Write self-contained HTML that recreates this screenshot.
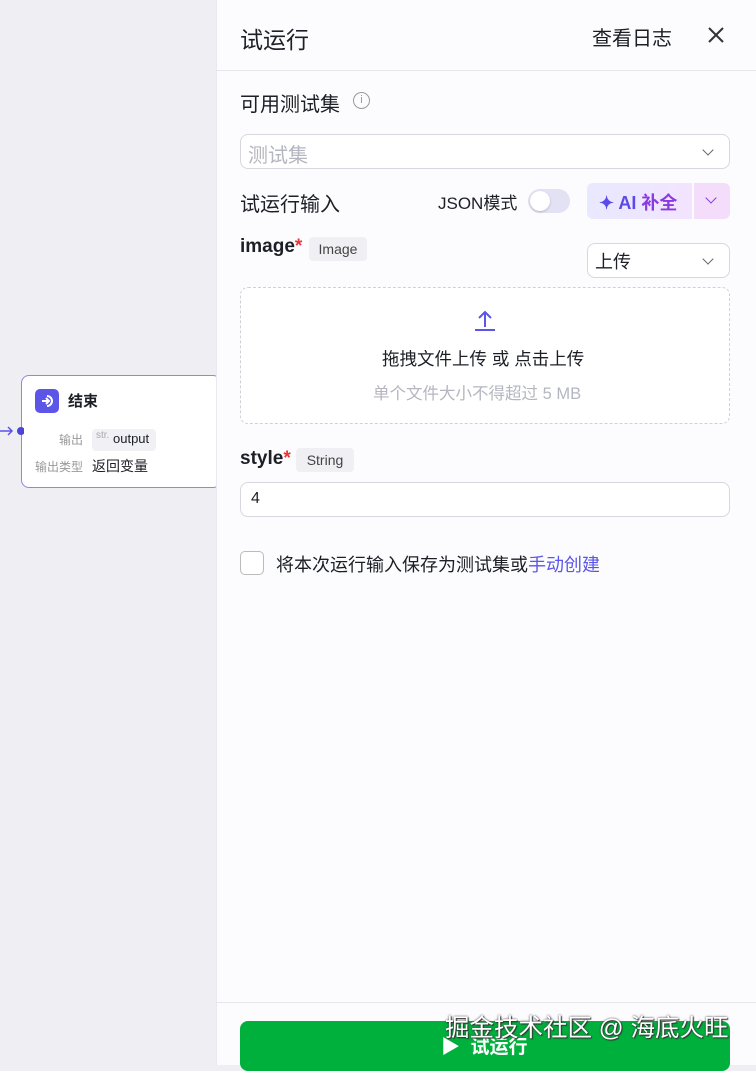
<!DOCTYPE html>
<html><head><meta charset="utf-8"><style>
*{box-sizing:border-box;margin:0;padding:0}
body{width:756px;height:1065px;overflow:hidden;background:#efeff3;font-family:"Liberation Sans","Noto Sans CJK SC",sans-serif;position:relative;color:#1d1f26}
.abs{position:absolute}
.panel{left:216px;top:0;width:540px;height:1065px;background:#fcfcfe;border-left:1px solid #e8e8ee}
.t{position:absolute;white-space:nowrap}
.input{position:absolute;border:1px solid #d6d7df;border-radius:8px;background:#fff}
.chev{position:absolute;width:8px;height:8px;border-right:1.5px solid #666;border-bottom:1.5px solid #666;transform:rotate(45deg)}
</style></head><body>
<!-- node -->
<div class="abs" style="left:21px;top:375px;width:200px;height:113px;background:#fff;border:1px solid #8f86e8;border-radius:8px"></div>
<div class="abs" style="left:35px;top:389px;width:24px;height:24px;background:#5b55e8;border-radius:5px"></div>
<svg class="abs" style="left:35px;top:389px" width="24" height="24"><path d="M7 12h7M11 9l3 3-3 3" stroke="#fff" stroke-width="2" fill="none"/><path d="M12 7a5 5 0 1 1 0 10" stroke="#fff" stroke-width="2" fill="none"/></svg>
<div class="t" style="left:68px;top:390px;font-size:15px;font-weight:bold">结束</div>
<svg class="abs" style="left:0;top:424px" width="24" height="14"><path d="M0 7h12M8 3l4 4-4 4" stroke="#5b55e8" stroke-width="1.5" fill="none"/><circle cx="21" cy="7" r="4" fill="#4b44d8"/></svg>
<div class="t" style="left:59px;top:431px;font-size:12px;color:#999">输出</div>
<div class="abs" style="left:92px;top:429px;width:64px;height:22px;background:#f1f1f5;border-radius:4px"></div>
<div class="t" style="left:96px;top:430px;font-size:10px;color:#aaa">str.</div>
<div class="t" style="left:113px;top:431px;font-size:13px">output</div>
<div class="t" style="left:35px;top:458px;font-size:12px;color:#999">输出类型</div>
<div class="t" style="left:92px;top:456px;font-size:14px">返回变量</div>
<!-- panel -->
<div class="abs panel"></div>
<div class="t" style="left:240px;top:21px;font-size:23px">试运行</div>
<div class="t" style="left:592px;top:22px;font-size:20px">查看日志</div>
<svg class="abs" style="left:707px;top:26px" width="18" height="18"><path d="M2 2l14 14M16 2L2 16" stroke="#333" stroke-width="2"/></svg>
<div class="abs" style="left:216px;top:70px;width:540px;height:1px;background:#e6e6ec"></div>
<div class="t" style="left:240px;top:88px;font-size:20px">可用测试集</div>
<div class="abs" style="left:353px;top:92px;width:17px;height:17px;border:1.3px solid #999;border-radius:50%;font-size:11px;color:#999;text-align:center;line-height:15px">i</div>
<div class="input" style="left:240px;top:134px;width:490px;height:35px"></div>
<div class="t" style="left:248px;top:139px;font-size:20px;color:#b5b6c0">测试集</div>
<div class="chev" style="left:704px;top:146px"></div>
<div class="t" style="left:240px;top:188px;font-size:20px">试运行输入</div>
<div class="t" style="left:438px;top:189px;font-size:17px">JSON模式</div>
<div class="abs" style="left:528px;top:189px;width:42px;height:24px;border-radius:12px;background:#e2e2f4"></div>
<div class="abs" style="left:530px;top:191px;width:20px;height:20px;border-radius:50%;background:#fff;box-shadow:0 1px 2px rgba(0,0,0,.2)"></div>
<div class="abs" style="left:587px;top:183px;width:105px;height:36px;border-radius:6px 0 0 6px;background:linear-gradient(90deg,#e8e8ff,#f3e4ff)"></div>
<div class="abs" style="left:694px;top:183px;width:36px;height:36px;border-radius:0 6px 6px 0;background:#f3ddfb"></div>
<div class="t" style="left:599px;top:189px;font-size:18px;font-weight:bold;color:#5b4ae8">✦ AI <span style="color:#8a3ae0">补全</span></div>
<div class="chev" style="left:707px;top:194px;border-color:#8a3ae0"></div>
<div class="t" style="left:240px;top:236px;font-size:19px;font-weight:bold">image<span style="color:#e33">*</span></div>
<div class="abs" style="left:309px;top:237px;width:58px;height:24px;background:#f0f0f4;border-radius:4px;font-size:14px;line-height:24px;text-align:center;color:#444">Image</div>
<div class="input" style="left:587px;top:243px;width:143px;height:35px"></div>
<div class="t" style="left:595px;top:248px;font-size:18px">上传</div>
<div class="chev" style="left:704px;top:255px"></div>
<div class="abs" style="left:240px;top:287px;width:490px;height:137px;border:1px dashed #cfd0d8;border-radius:8px;background:#fff"></div>
<svg class="abs" style="left:472px;top:307px" width="26" height="26"><path d="M13 20V5M7 11l6-6 6 6M3 23h20" stroke="#5b55e8" stroke-width="2" fill="none"/></svg>
<div class="t" style="left:382px;top:346px;font-size:17.5px">拖拽文件上传 或 点击上传</div>
<div class="t" style="left:373px;top:380px;font-size:16.5px;color:#b5b6c0">单个文件大小不得超过 5 MB</div>
<div class="t" style="left:240px;top:448px;font-size:19px;font-weight:bold">style<span style="color:#e33">*</span></div>
<div class="abs" style="left:296px;top:448px;width:58px;height:24px;background:#f0f0f4;border-radius:4px;font-size:14px;line-height:24px;text-align:center;color:#444">String</div>
<div class="input" style="left:240px;top:482px;width:490px;height:35px"></div>
<div class="t" style="left:251px;top:490px;font-size:16px">4</div>
<div class="abs" style="left:240px;top:551px;width:24px;height:24px;border:1.5px solid #bbb;border-radius:5px;background:#fff"></div>
<div class="t" style="left:276px;top:551px;font-size:18px">将本次运行输入保存为测试集或<span style="color:#5b55e8">手动创建</span></div>
<div class="abs" style="left:216px;top:1002px;width:540px;height:1px;background:#e6e6ec"></div>
<div class="abs" style="left:240px;top:1021px;width:490px;height:50px;border-radius:8px;background:#00b03c"></div>
<div class="t" style="left:441px;top:1032px;font-size:19px;font-weight:bold;color:#fff">▶ &nbsp;试运行</div>
<div class="t" style="left:445px;top:1009px;font-size:24.5px;color:#fff;text-shadow:0 0 2px #333,1px 1px 1px #333">掘金技术社区 @ 海底火旺</div>
</body></html>
